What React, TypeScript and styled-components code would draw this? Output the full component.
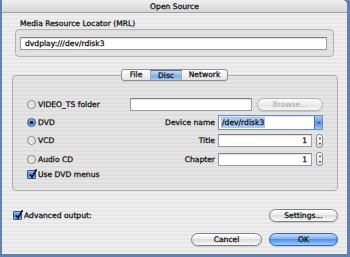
import { FC } from "react";
import styled, { createGlobalStyle, css } from "styled-components";

const GlobalStyle = createGlobalStyle`
  html, body {
    margin: 0;
    padding: 0;
  }
  body {
    font-family: "DejaVu Sans", "Liberation Sans", sans-serif;
    font-size: 7.6px;
    color: #0c0c0c;
    -webkit-text-stroke: 0.25px currentColor;
  }
  * { box-sizing: border-box; }
`;

const Screen = styled.div`
  width: 350px;
  height: 257px;
  background: #5f82b2;
  padding: 0 3px 3px 2px;
  display: flex;
`;

const Window = styled.div`
  flex: 1;
  display: flex;
  flex-direction: column;
  border-radius: 0 5px 0 0;
  overflow: hidden;
  background: repeating-linear-gradient(to bottom, #eeeeee 0 2px, #e7e7e7 2px 4px);
`;

const TitleBar = styled.div`
  height: 13px;
  flex: none;
  text-align: center;
  line-height: 13px;
  font-size: 7.6px;
  background: linear-gradient(to bottom, #f0f0f0, #d6d6d6);
  border-bottom: 1px solid #a0a0a0;
`;

const SectionLabel = styled.div`
  margin: 5px 0 0 18px;
  height: 11px;
  line-height: 11px;
`;

const GroupBox = styled.div`
  margin: 0 13px 0 13px;
  height: 28px;
  padding: 7px 6px 0 4px;
  border: 1px solid #b2b2b2;
  border-radius: 4px;
  background: rgba(0, 0, 0, 0.035);
`;

const field = css`
  height: 13px;
  background: #fff;
  border: 1px solid #9c9c9c;
  border-top-color: #7d7d7d;
  box-shadow: inset 0 1px 1px rgba(0, 0, 0, 0.12);
  line-height: 11px;
  padding: 0 4px;
  white-space: nowrap;
  overflow: hidden;
`;

const TextField = styled.div<{ $align?: "left" | "right"; $width?: number }>`
  ${field};
  text-align: ${(p) => p.$align ?? "left"};
  ${(p) => (p.$width ? `width: ${p.$width}px;` : "")}
`;

const TabStrip = styled.div`
  margin-top: 12px;
  margin-bottom: -6px;
  display: flex;
  justify-content: center;
  position: relative;
  z-index: 1;
`;

const TabGroup = styled.div`
  display: flex;
  height: 12px;
  border: 1px solid #8e8e8e;
  border-radius: 3px;
  overflow: hidden;
  background: linear-gradient(to bottom, #ffffff, #e2e2e2);
  box-shadow: 0 1px 0 rgba(0, 0, 0, 0.08);
`;

const Tab = styled.div<{ $active?: boolean; $width: number }>`
  width: ${(p) => p.$width}px;
  text-align: center;
  line-height: 10px;
  border-left: 1px solid #a8a8a8;
  &:first-child { border-left: none; }
  ${(p) =>
    p.$active &&
    css`
      background: linear-gradient(to bottom, #c7dcf5 0%, #8fb7ea 50%, #77a6e4 51%, #a9cbf3 100%);
      border-top: 1px solid #4d6fb0;
    `}
`;

const Panel = styled.div`
  margin: 0 9px 0 10px;
  height: 116px;
  border: 1px solid #acacac;
  border-radius: 4px;
  background: rgba(0, 0, 0, 0.035);
  padding: 19px 0 0 14px;
`;

const Row = styled.div<{ $h?: number }>`
  display: grid;
  grid-template-columns: 103px 88px 105px;
  align-items: center;
  height: ${(p) => p.$h ?? 18.4}px;
`;

const Choice = styled.label`
  display: flex;
  align-items: center;
  gap: 2px;
`;

const RadioDot = styled.span<{ $on?: boolean }>`
  width: 9px;
  height: 9px;
  border-radius: 50%;
  flex: none;
  border: 1px solid ${(p) => (p.$on ? "#35578f" : "#858585")};
  background: ${(p) =>
    p.$on
      ? "radial-gradient(circle at 50% 50%, #16233c 0 1.6px, transparent 2px), linear-gradient(to bottom, #9dc1ee, #4f86d4 55%, #8cbaf0)"
      : "linear-gradient(to bottom, #f4f4f4, #dcdcdc 55%, #ffffff)"};
`;

const CheckBox = styled.span`
  width: 9px;
  height: 9px;
  flex: none;
  position: relative;
  border: 1px solid #35578f;
  border-radius: 1px;
  background: linear-gradient(to bottom, #9dc1ee, #4f86d4 55%, #8cbaf0);
`;

const CheckMark = styled.svg`
  position: absolute;
  left: 0;
  top: -3px;
`;

const FieldLabel = styled.div`
  text-align: right;
  padding-right: 3px;
  white-space: nowrap;
`;

const SplitCell = styled.div`
  grid-column: 2 / span 2;
  display: flex;
  align-items: center;
  gap: 5px;
`;

const PillButton = styled.div<{ $width: number; $primary?: boolean; $disabled?: boolean }>`
  width: ${(p) => p.$width}px;
  height: 13px;
  border-radius: 7px;
  text-align: center;
  line-height: 11px;
  border: 1px solid ${(p) => (p.$primary ? "#3561a8" : p.$disabled ? "#b4b4b4" : "#7f7f7f")};
  color: ${(p) => (p.$disabled ? "#a4a4a4" : "#0c0c0c")};
  -webkit-text-stroke: ${(p) => (p.$disabled ? "0" : "0.25px currentColor")};
  background: ${(p) =>
    p.$primary
      ? "linear-gradient(to bottom, #c3dcfa 0%, #7eb0ef 45%, #4f90e6 50%, #9fcbfb 100%)"
      : p.$disabled
      ? "linear-gradient(to bottom, #fbfbfb, #ececec 50%, #e4e4e4 51%, #f6f6f6)"
      : "linear-gradient(to bottom, #ffffff, #ececec 45%, #dcdcdc 50%, #fafafa)"};
  box-shadow: 0 1px 1px rgba(0, 0, 0, 0.12);
`;

const ComboBox = styled.div`
  ${field};
  height: 15px;
  display: flex;
  align-items: center;
  padding: 0 0 0 2px;
  border-color: #6e8fc0;
`;

const Selected = styled.span`
  background: #a9c9f2;
  padding: 0 1px;
  line-height: 11px;
`;

const ComboArrow = styled.span`
  margin-left: auto;
  width: 8px;
  height: 13px;
  background: linear-gradient(to bottom, #a9cbf3, #5a93e0 55%, #9ac4f4);
  border-left: 1px solid #4b74b4;
  display: flex;
  align-items: center;
  justify-content: center;
`;

const NumberCell = styled.div`
  display: flex;
  align-items: center;
  gap: 4px;
`;

const Stepper = styled.span`
  width: 7px;
  height: 14px;
  flex: none;
  border: 1px solid #8a8a8a;
  border-radius: 3px;
  background: linear-gradient(to bottom, #fafafa, #e0e0e0);
  display: flex;
  flex-direction: column;
  align-items: center;
  justify-content: space-around;
`;

const Tri = styled.span<{ $up?: boolean }>`
  width: 0;
  height: 0;
  border-left: 1.5px solid transparent;
  border-right: 1.5px solid transparent;
  ${(p) =>
    p.$up ? "border-bottom: 2px solid #222;" : "border-top: 2px solid #222;"}
`;

const Footer = styled.div`
  display: flex;
  align-items: center;
  justify-content: space-between;
  padding: 0 9px 0 11px;
  margin-top: 18px;
  height: 12px;
`;

const Actions = styled.div`
  display: flex;
  justify-content: flex-end;
  gap: 7px;
  padding-right: 9px;
  margin-top: 12px;
`;

const Check: FC = () => (
  <CheckBox>
    <CheckMark width="10" height="11" viewBox="0 0 10 11">
      <path d="M1.8 6.4 L4 9 L8.6 1.2" fill="none" stroke="#10182a" strokeWidth="1.7" />
    </CheckMark>
  </CheckBox>
);

const NumberField: FC<{ value: string }> = ({ value }) => (
  <NumberCell>
    <TextField $align="right" $width={95}>{value}</TextField>
    <Stepper>
      <Tri $up />
      <Tri />
    </Stepper>
  </NumberCell>
);

const App: FC = () => {
  return (
    <>
      <GlobalStyle />
      <Screen>
        <Window>
          <TitleBar>Open Source</TitleBar>
          <SectionLabel>Media Resource Locator (MRL)</SectionLabel>
          <GroupBox>
            <TextField>dvdplay:///dev/rdisk3</TextField>
          </GroupBox>

          <TabStrip>
            <TabGroup>
              <Tab $width={28}>File</Tab>
              <Tab $width={31} $active>Disc</Tab>
              <Tab $width={46}>Network</Tab>
            </TabGroup>
          </TabStrip>
          <Panel>
            <Row>
              <Choice><RadioDot />VIDEO_TS folder</Choice>
              <SplitCell>
                <TextField $width={122} />
                <PillButton $width={66} $disabled>Browse...</PillButton>
              </SplitCell>
            </Row>
            <Row>
              <Choice><RadioDot $on />DVD</Choice>
              <FieldLabel>Device name</FieldLabel>
              <ComboBox>
                <Selected>/dev/rdisk3</Selected>
                <ComboArrow>
                  <Tri />
                </ComboArrow>
              </ComboBox>
            </Row>
            <Row>
              <Choice><RadioDot />VCD</Choice>
              <FieldLabel>Title</FieldLabel>
              <NumberField value="1" />
            </Row>
            <Row>
              <Choice><RadioDot />Audio CD</Choice>
              <FieldLabel>Chapter</FieldLabel>
              <NumberField value="1" />
            </Row>
            <Row $h={12}>
              <Choice><Check />Use DVD menus</Choice>
            </Row>
          </Panel>

          <Footer>
            <Choice><Check />Advanced output:</Choice>
            <PillButton $width={69}>Settings...</PillButton>
          </Footer>
          <Actions>
            <PillButton $width={71}>Cancel</PillButton>
            <PillButton $width={69} $primary>OK</PillButton>
          </Actions>
        </Window>
      </Screen>
    </>
  );
};

export default App;
